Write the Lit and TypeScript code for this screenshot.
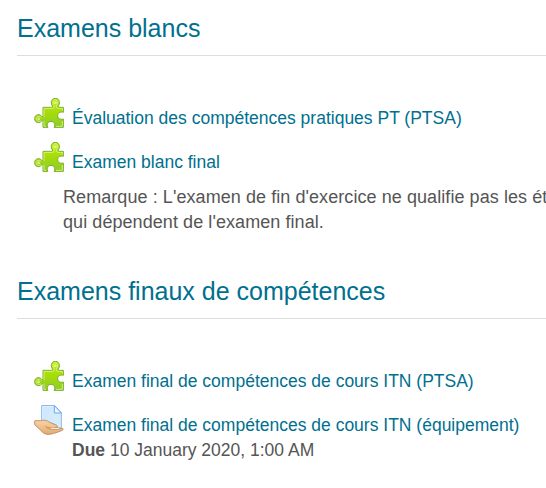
import { LitElement, html, css, svg } from "lit";
import { customElement, property } from "lit/decorators.js";

@customElement("activity-icon")
class ActivityIcon extends LitElement {
  @property() kind = "package";

  static styles = css`
    :host { display: block; flex: none; width: 30px; height: 30px; }
    svg { display: block; width: 30px; height: 30px; }
  `;

  render() {
    const puzzle = svg`
      <defs>
        <linearGradient id="g" x1="0" y1="0" x2="0" y2="1">
          <stop offset="0" stop-color="#b9ee1c"></stop>
          <stop offset=".5" stop-color="#a6dc08"></stop>
          <stop offset="1" stop-color="#8ccb30"></stop>
        </linearGradient>
      </defs>
      <path d="M27 28H53Q57 28 56 24C49 19 50 1 64 1S79 19 72 24Q71 28 75 28H88V43C82 41 71 42 71 53S82 65 88 63V88H60C65 81 61 70 51 70S37 81 42 88H27V70Q27 66 23 69C18 77 2 76 2 62S18 47 23 55Q27 58 27 54Z" fill="url(#g)" stroke="#79ab24" stroke-width="3" stroke-linejoin="round"></path>
      <path d="M30 57V31H56Q62 30 61 23C54 17 57 5 64 5S74 17 67 23Q66 30 72 31H85V38M30 68V85H36M66 85H85V69M22 69C16 72 6 70 6 62S17 53 22 58" fill="none" stroke="#dcf58a" stroke-width="3" opacity=".85"></path>
      <circle cx="64" cy="14" r="4.5" fill="#e2fa66"></circle>
      <circle cx="14" cy="62" r="4.5" fill="#d2f06a"></circle>`;
    const assignment = svg`
      <defs>
        <linearGradient id="p" x1="0" y1="0" x2="1" y2="1">
          <stop offset="0" stop-color="#cfe6fc"></stop>
          <stop offset="1" stop-color="#d6f0fd"></stop>
        </linearGradient>
        <linearGradient id="h" x1="0" y1="0" x2="0" y2="1">
          <stop offset="0" stop-color="#f8d3a6"></stop>
          <stop offset="1" stop-color="#e3ac74"></stop>
        </linearGradient>
      </defs>
      <path d="M23 1.5H62L82 23V70H23Z" fill="url(#p)" stroke="#8db9f2" stroke-width="3"></path>
      <path d="M26 5H58M26 5V58" fill="none" stroke="#e9f5ff" stroke-width="2"></path>
      <path d="M61 2V24H82Z" fill="#edf7ff" stroke="#75a3ec" stroke-width="3"></path>
      <path d="M2 48C6 45 13 48 19 47C30 44 37 45 47 52L67 60C73 63 70 67 65 68L85 70C91 72 86 76 80 78C64 84 52 89 39 88C26 86 22 77 13 69L2 59Z" fill="url(#h)" stroke="#b98355" stroke-width="2.5" stroke-linejoin="round"></path>
      <path d="M37 68C45 73 56 74 76 73M34 64C43 69 55 70 66 68" fill="none" stroke="#bd844e" stroke-width="2"></path>
      <path d="M51 70L75 71" stroke="#eef4f7" stroke-width="3"></path>`;
    return html`<svg viewBox="0 0 90 90" aria-hidden="true">${this.kind === "assign" ? assignment : puzzle}</svg>`;
  }
}

@customElement("app-root")
class AppRoot extends LitElement {
  static styles = css`
    :host {
      display: block; height: 488px; overflow: hidden; background: #fff;
      font: 17.5px/25px "Liberation Sans", Arial, sans-serif; color: #555;
    }
    section { height: 263px; }
    h2 {
      box-sizing: border-box; height: 56px; margin: 0 0 0 17px; padding-top: 13px;
      border-bottom: 1px solid #ddd; font-size: 25px; line-height: 31px;
      font-weight: 400; color: #00708f; white-space: nowrap;
    }
    .list { padding: 42px 0 0 34px; }
    .item { display: flex; gap: 8px; height: 44px; white-space: nowrap; }
    .item:has(+ .note) { height: 43px; }
    .text { padding-top: 8px; }
    a { color: #00708f; text-decoration: none; }
    .note { padding: 0 0 0 29px; white-space: nowrap; font-size: 18px; letter-spacing: .07px; }
  `;

  render() {
    return html`
      <section>
        <h2><span>Examens blancs</span></h2>
        <div class="list">
          <div class="item"><activity-icon></activity-icon><div class="text"><a>Évaluation des compétences pratiques PT (PTSA)</a></div></div>
          <div class="item"><activity-icon></activity-icon><div class="text"><a>Examen blanc final</a></div></div>
          <div class="note"><span>Remarque : L'examen de fin d'exercice ne qualifie pas les ét</span><br><span>qui dépendent de l'examen final.</span></div>
        </div>
      </section>
      <section>
        <h2><span>Examens finaux de compétences</span></h2>
        <div class="list">
          <div class="item"><activity-icon></activity-icon><div class="text"><a>Examen final de compétences de cours ITN (PTSA)</a></div></div>
          <div class="item"><activity-icon kind="assign"></activity-icon><div class="text"><a>Examen final de compétences de cours ITN (équipement)</a><br><span class="due"><b>Due</b> 10 January 2020, 1:00 AM</span></div></div>
        </div>
      </section>`;
  }
}
